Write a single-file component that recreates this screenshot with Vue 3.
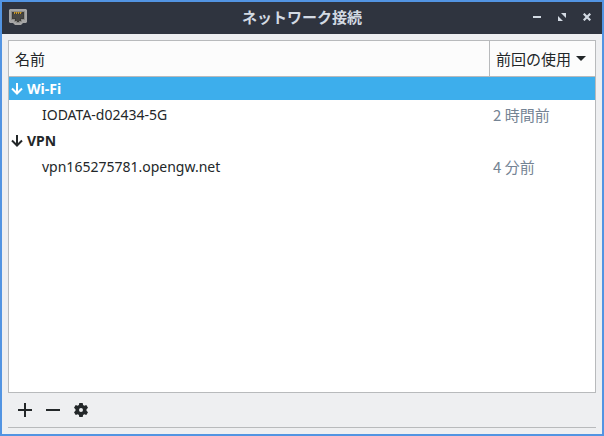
<script setup>
import { ref } from 'vue'

const groups = ref([
  { type: 'Wi-Fi', selected: true, items: [{ name: 'IODATA-d02434-5G', used: '2 時間前' }] },
  { type: 'VPN', selected: false, items: [{ name: 'vpn165275781.opengw.net', used: '4 分前' }] },
])
</script>

<template>
  <div class="window">
    <header class="titlebar">
      <svg class="app-icon" width="18" height="16" viewBox="0 0 18 16" aria-hidden="true">
        <path d="M1 0h16l1 1v12l-1 1h-3l-1 1-1 1H6l-1-1-1-1H1l-1-1V1z" fill="#a6a6a6" />
        <path d="M2 2h14v9h-3v2h-2v1H7v-1H5v-2H2z" fill="#8c8c8a" />
        <path d="M3 3h12v7h-3v2h-2v1H8v-1H6v-2H3z" fill="#3c3c3a" />
        <path d="M4 5h10v4h-3v3H7V9H4z" fill="#474745" />
        <path d="M5 3h8v1H5z" fill="#8a6a20" />
        <path d="M5 3h1v2H5zM7 3h1v2H7zM9 3h1v2H9zM11 3h1v2h-1z" fill="#c99a2c" />
      </svg>
      <h1 class="title">ネットワーク接続</h1>
      <div class="controls">
        <button type="button" aria-label="最小化">
          <svg width="8" height="8" viewBox="0 0 8 8"><path d="M0 3h8v2H0z" fill="#d3dae3" /></svg>
        </button>
        <button type="button" aria-label="最大化">
          <svg width="8" height="8" viewBox="0 0 8 8"><path d="M3 0h5v5zM0 3l5 5H0z" fill="#d3dae3" /></svg>
        </button>
        <button type="button" aria-label="閉じる">
          <svg width="8" height="8" viewBox="0 0 8 8"><path d="M0.700 0.700l6.600 6.600M7.300 0.700L0.700 7.300" stroke="#d3dae3" stroke-width="2.200" /></svg>
        </button>
      </div>
    </header>

    <main class="content">
      <div class="list">
        <table>
          <thead>
            <tr>
              <th class="name" scope="col"><button type="button">名前</button></th>
              <th class="used" scope="col" aria-sort="descending">
                <button type="button">
                  前回の使用
                  <svg width="10" height="5" viewBox="0 0 10 5" aria-hidden="true"><path d="M0 0h10L5 5z" fill="#232729" /></svg>
                </button>
              </th>
            </tr>
          </thead>
          <tbody v-for="group in groups" :key="group.type">
            <tr class="group" :class="{ selected: group.selected }">
              <td colspan="2">
                <div class="group-label">
                  <svg width="12" height="12" viewBox="0 0 12 12" aria-hidden="true">
                    <path d="M6 0v10M1 5.5l5 5 5-5" fill="none" stroke="currentColor" stroke-width="2" />
                  </svg>
                  {{ group.type }}
                </div>
              </td>
            </tr>
            <tr v-for="item in group.items" :key="item.name" class="item">
              <td class="item-name">{{ item.name }}</td>
              <td class="item-used">{{ item.used }}</td>
            </tr>
          </tbody>
        </table>
      </div>
      <div class="toolbar">
        <button type="button" aria-label="追加">
          <svg width="16" height="16" viewBox="0 0 16 16"><path d="M7 1h2v6h6v2H9v6H7V9H1V7h6z" fill="#232729" /></svg>
        </button>
        <button type="button" aria-label="削除">
          <svg width="16" height="16" viewBox="0 0 16 16"><path d="M1 7h14v2H1z" fill="#232729" /></svg>
        </button>
        <button type="button" aria-label="設定">
          <svg width="16" height="16" viewBox="0 0 16 16">
            <path
              fill="#232729"
              fill-rule="evenodd"
              d="M6.300 1h3.400l.4 2 1.200.7 2-.8L15 5.800l-1.500 1.400v1.600L15 10.200l-1.700 2.900-2-.8-1.200.7-.4 2H6.300l-.4-2-1.200-.7-2 .8L1 10.200l1.500-1.400V7.200L1 5.800l1.700-2.900 2 .8L5.900 3zM8 6a2 2 0 1 0 0 4 2 2 0 0 0 0-4z"
            />
          </svg>
        </button>
      </div>
    </main>
  </div>
</template>

<style>
body {
  margin: 0;
}
</style>

<style scoped>
.window {
  box-sizing: border-box;
  min-height: 100vh;
  display: flex;
  flex-direction: column;
  border: 2px solid #5294e2;
  background: #eeeff1;
  color: #232729;
  font-family: "Noto Sans", "Noto Sans CJK JP", sans-serif;
  font-size: 15px;
}

button {
  margin: 0;
  padding: 0;
  border: 0;
  background: none;
  color: inherit;
  font: inherit;
}

svg {
  display: block;
  flex: none;
}

.titlebar {
  box-sizing: border-box;
  display: grid;
  grid-template-columns: 1fr auto 1fr;
  align-items: center;
  height: 32px;
  padding: 0 11px 2px;
  padding-left: 7px;
  background: #2f343f;
  color: #d3dae3;
}

.title {
  margin: 0;
  padding-left: 4px;
  font-family: "Noto Sans CJK JP", sans-serif;
  font-size: 15px;
  font-weight: 700;
  line-height: 24px;
}

.controls {
  display: flex;
  justify-content: flex-end;
  gap: 17px;
}

.content {
  flex: 1;
  display: flex;
  flex-direction: column;
  padding: 6px 6px 0;
}

.list {
  flex: 1;
  border: 1px solid #b8babc;
  background: #fff;
}

table {
  width: 100%;
  table-layout: fixed;
  border-spacing: 0;
}

th {
  box-sizing: border-box;
  height: 36px;
  padding: 0 6px;
  border-bottom: 1px solid #b8babc;
  background: #fcfcfc;
  font-weight: 400;
  text-align: left;
}

th button {
  display: flex;
  align-items: center;
  gap: 5px;
  line-height: 24px;
}

.used {
  width: 106px;
  border-left: 1px solid #b8babc;
}

td {
  padding: 0;
}

.group-label {
  display: flex;
  align-items: center;
  gap: 4px;
  padding-left: 2px;
  font-size: 14px;
  font-weight: 700;
  line-height: 23px;
}

.selected {
  background: #3daeec;
  color: #fff;
}

.item td {
  height: 29px;
  line-height: 24px;
  white-space: nowrap;
}

.item .item-name {
  padding-left: 33px;
  font-size: 14px;
}

.item .item-used {
  padding-left: 4px;
  color: #758494;
  font-family: "Noto Sans CJK JP", sans-serif;
}

.toolbar {
  display: flex;
  align-items: center;
  gap: 12px;
  height: 34px;
  margin-bottom: 6px;
  padding-left: 9px;
  border-bottom: 1px solid #b8babc;
}
</style>
